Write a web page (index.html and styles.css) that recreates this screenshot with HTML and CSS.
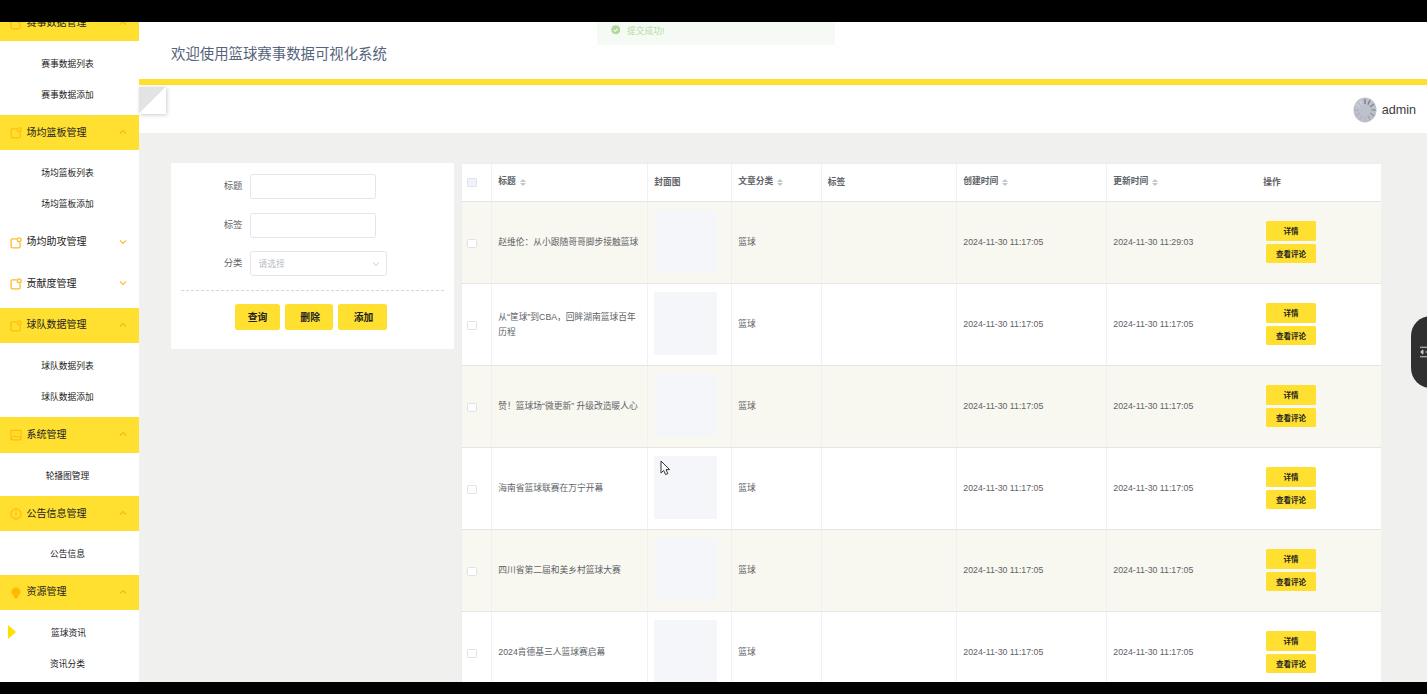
FILE: index.html
```html
<!DOCTYPE html>
<html lang="zh-CN">
<head>
<meta charset="utf-8">
<title>篮球赛事数据可视化系统</title>
<link rel="stylesheet" href="styles.css">
</head>
<body>
<svg class="defs" width="0" height="0">
  <symbol id="note" viewBox="0 0 12 12"><path d="M6.8 1.9H2.4Q1.1 1.9 1.1 3.2V9.6Q1.1 10.9 2.4 10.9H8.8Q10.1 10.9 10.1 9.6V5.4" /><circle cx="9.2" cy="2.8" r="1.9"/></symbol>
  <symbol id="pic" viewBox="0 0 12 12"><rect x="1" y="1.4" width="10" height="9.4"/><path d="M1.3 9.6L4.3 6.6L6.2 8.4L8.2 7L10.8 9.2M7.3 4.3h1.2M3.2 4.3h1"/></symbol>
  <symbol id="warn" viewBox="0 0 12 12"><circle cx="6" cy="6" r="5"/><path d="M6 3V7M6 8V9.2"/></symbol>
  <symbol id="bulb" viewBox="0 0 12 12"><path class="solid" d="M6 .5A4.4 4.4 0 0 1 8.9 8.2L7.9 9.2V10.4L6.9 11.6H5.1L4.1 10.4V9.2L3.1 8.2A4.4 4.4 0 0 1 6 .5Z"/></symbol>
  <symbol id="chev" viewBox="0 0 8 8"><path d="M1 2.5L4 5.4L7 2.5"/></symbol>
</svg>
<div class="screen">
  <nav class="sidebar">
    <div class="group open"><svg class="ico"><use href="#note"/></svg><span>赛事数据管理</span><svg class="arrow"><use href="#chev"/></svg></div>
    <div class="sub"><a>赛事数据列表</a><a>赛事数据添加</a></div>
    <div class="group open"><svg class="ico"><use href="#note"/></svg><span>场均篮板管理</span><svg class="arrow"><use href="#chev"/></svg></div>
    <div class="sub"><a>场均篮板列表</a><a>场均篮板添加</a></div>
    <div class="group"><svg class="ico"><use href="#note"/></svg><span>场均助攻管理</span><svg class="arrow"><use href="#chev"/></svg></div>
    <div class="group"><svg class="ico"><use href="#note"/></svg><span>贡献度管理</span><svg class="arrow"><use href="#chev"/></svg></div>
    <div class="group open"><svg class="ico"><use href="#note"/></svg><span>球队数据管理</span><svg class="arrow"><use href="#chev"/></svg></div>
    <div class="sub"><a>球队数据列表</a><a>球队数据添加</a></div>
    <div class="group open"><svg class="ico"><use href="#pic"/></svg><span>系统管理</span><svg class="arrow"><use href="#chev"/></svg></div>
    <div class="sub"><a>轮播图管理</a></div>
    <div class="group open"><svg class="ico"><use href="#warn"/></svg><span>公告信息管理</span><svg class="arrow"><use href="#chev"/></svg></div>
    <div class="sub"><a>公告信息</a></div>
    <div class="group open"><svg class="ico"><use href="#bulb"/></svg><span>资源管理</span><svg class="arrow"><use href="#chev"/></svg></div>
    <div class="sub"><a class="current">篮球资讯</a><a>资讯分类</a></div>
  </nav>
  <div class="page">
    <header class="banner"><h1>欢迎使用篮球赛事数据可视化系统</h1></header>
    <div class="userbar">
      <div class="fold"></div>
      <div class="user">
        <svg class="avatar" viewBox="0 0 24 26"><ellipse cx="12" cy="13" rx="11.5" ry="12.5" fill="#bcc1cb"/>
          <g stroke-width="1.4"><path d="M12 2V7" stroke="#777d8b"/><path d="M17 3.2L14.8 7.8" stroke="#7b808c"/><path d="M21 7.2L17 9.8" stroke="#858b97"/><path d="M23 13H18.4" stroke="#8d929d"/><path d="M21.2 18.8L17.2 16.2" stroke="#969ba5"/><path d="M17.3 23L15 18.5" stroke="#9fa4ae"/><path d="M12 24V19.5M6.7 23L9 18.5M2.8 18.8L6.8 16.2M1.2 13H5.8" stroke="#afb4be"/><path d="M2.8 7.2L6.8 9.8M6.8 3.2L9 7.8" stroke="#cdd1d8"/></g></svg>
        <span>admin</span>
      </div>
    </div>
    <main class="content">
      <form class="filter">
        <div class="field"><label>标题</label><div class="input"></div></div>
        <div class="field"><label>标签</label><div class="input"></div></div>
        <div class="field"><label>分类</label><div class="input select"><span>请选择</span><svg class="down"><use href="#chev"/></svg></div></div>
        <div class="actions"><button type="button" class="btn first">查询</button><button type="button" class="btn">删除</button><button type="button" class="btn">添加</button></div>
      </form>
      <section class="table">
        <div class="row head">
          <div><i class="check all"></i></div><div class="sortable">标题<i class="sort"></i></div><div>封面图</div><div class="sortable">文章分类<i class="sort"></i></div><div>标签</div><div class="sortable">创建时间<i class="sort"></i></div><div class="sortable">更新时间<i class="sort"></i></div><div class="ops">操作</div>
        </div>
        <div class="row"><div><i class="check"></i></div><div>赵维伦：从小跟随哥哥脚步接触篮球</div><div><i class="cover"></i></div><div>篮球</div><div></div><div>2024-11-30 11:17:05</div><div>2024-11-30 11:29:03</div><div class="ops"><button class="mini">详情</button><button class="mini">查看评论</button></div></div>
        <div class="row"><div><i class="check"></i></div><div>从“筐球”到CBA，回眸湖南篮球百年历程</div><div><i class="cover"></i></div><div>篮球</div><div></div><div>2024-11-30 11:17:05</div><div>2024-11-30 11:17:05</div><div class="ops"><button class="mini">详情</button><button class="mini">查看评论</button></div></div>
        <div class="row"><div><i class="check"></i></div><div>赞！篮球场“微更新” 升级改造暖人心</div><div><i class="cover"></i></div><div>篮球</div><div></div><div>2024-11-30 11:17:05</div><div>2024-11-30 11:17:05</div><div class="ops"><button class="mini">详情</button><button class="mini">查看评论</button></div></div>
        <div class="row"><div><i class="check"></i></div><div>海南省篮球联赛在万宁开幕</div><div><i class="cover"></i></div><div>篮球</div><div></div><div>2024-11-30 11:17:05</div><div>2024-11-30 11:17:05</div><div class="ops"><button class="mini">详情</button><button class="mini">查看评论</button></div></div>
        <div class="row"><div><i class="check"></i></div><div>四川省第二届和美乡村篮球大赛</div><div><i class="cover"></i></div><div>篮球</div><div></div><div>2024-11-30 11:17:05</div><div>2024-11-30 11:17:05</div><div class="ops"><button class="mini">详情</button><button class="mini">查看评论</button></div></div>
        <div class="row"><div><i class="check"></i></div><div>2024肯德基三人篮球赛启幕</div><div><i class="cover"></i></div><div>篮球</div><div></div><div>2024-11-30 11:17:05</div><div>2024-11-30 11:17:05</div><div class="ops"><button class="mini">详情</button><button class="mini">查看评论</button></div></div>
      </section>
    </main>
  </div>
  <div class="toast"><svg viewBox="0 0 10 10"><circle cx="5" cy="5" r="4.8" fill="#add99a"/><path d="M2.8 5.1L4.4 6.6L7.3 3.7" fill="none" stroke="#f5fbf2" stroke-width="1.1"/></svg><span>提交成功!</span></div>
  <div class="drawer"><svg viewBox="0 0 12 12"><path d="M0 1.2H12M0 10.8H12M1 6H4M5.5 6H12M3.2 4L1 6L3.2 8" fill="none" stroke="#d0d0d0" stroke-width="1.1"/></svg></div>
  <svg class="cursor" viewBox="0 0 11 16"><path d="M1 1V13L3.7 10.5L5.6 14.6L7.8 13.6L6 9.6H9.6Z" fill="#fff" stroke="#333" stroke-width="1"/></svg>
</div>
</body>
</html>
```
FILE: styles.css
```css
* { box-sizing: border-box; }
body {
  margin: 0;
  height: 694px;
  padding: 22px 0 12px;
  overflow: hidden;
  background: #000;
  font-family: "Liberation Sans", "Noto Sans CJK SC", sans-serif;
  color: #606266;
}
.defs { position: absolute; }
.screen {
  position: relative;
  display: flex;
  height: 660px;
  overflow: hidden;
  background: #f0f0ee;
}

/* Sidebar */
.sidebar {
  width: 139px;
  flex: none;
  margin-top: -16.6px;
  background: #fff;
  color: #222;
}
.group {
  display: flex;
  align-items: center;
  height: 35.2px;
  padding: 0 12px 0 9.5px;
  font-size: 10px;
  color: #222;
}
.group + .group { margin-top: 6.25px; }
.group.open { background: #ffdf30; }
.group span { flex: 1; padding-bottom: 3px; }
.ico { width: 12px; height: 12px; margin: 1px 5px 0 0; fill: none; stroke: #ffb92c; stroke-width: 1.3; }
.open .ico { stroke: #ffbf0e; }
.solid { fill: #ffb900; stroke: none; }
.arrow { width: 8px; height: 8px; margin-bottom: 1px; fill: none; stroke: #ffb92c; stroke-width: 1.1; }
.open .arrow { transform: rotate(180deg); stroke: #f5b81c; }
.sub { padding: 6.25px 0; }
.sub a {
  display: flex;
  align-items: center;
  justify-content: center;
  position: relative;
  height: 31px;
  padding: 1.5px 4px 0 0;
  font-size: 8.75px;
  color: #222;
}
.sub a.current { padding-right: 2px; }
.sub a.current::before {
  content: "";
  position: absolute;
  left: 8px;
  top: 9px;
  border: 7px solid transparent;
  border-left: 8px solid #ffe000;
  border-right-width: 0;
}

/* Page head */
.page { flex: 1; min-width: 0; }
.banner {
  height: 63px;
  padding: 0 32px;
  border-bottom: 6px solid #ffdf30;
  background: #fff;
}
h1 { margin: 0; font-size: 14.4px; font-weight: 400; line-height: 64px; color: #56647a; }
.userbar {
  display: flex;
  justify-content: space-between;
  height: 48px;
  padding: 1.5px 11px 0 0;
  background: #fff;
}
.fold {
  width: 27px;
  height: 27px;
  background: linear-gradient(135deg, #e3e3e3 50%, #fff 50%);
  box-shadow: 1px 1px 4px rgba(0, 0, 0, .2);
}
.user { display: flex; align-items: center; gap: 4.5px; font-size: 12.6px; color: #3b3b3b; }
.avatar { width: 24px; height: 26px; }

/* Filter form */
.content { display: flex; align-items: flex-start; gap: 7px; padding: 30px 46px 0 32px; }
.filter { flex: none; width: 283px; height: 186px; padding: 10.5px 10px 0; background: #fff; }
.field { display: flex; align-items: flex-start; margin-bottom: 14px; }
.field:nth-child(3) { margin-top: -.5px; }
label { width: 61.5px; margin-right: 7px; padding-top: 1px; text-align: right; font-size: 9.4px; line-height: 22px; color: #606266; }
.input { width: 126px; height: 25px; border: 1px solid #e3e5ea; border-radius: 2.5px; }
.select {
  display: flex;
  align-items: center;
  justify-content: space-between;
  width: 137px;
  padding: 0 6px 0 8px;
  font-size: 8.75px;
  color: #b8bcc6;
}
.down { width: 8px; height: 8px; fill: none; stroke: #c0c4cc; stroke-width: .9; }
.actions {
  display: flex;
  gap: 5px;
  padding: 12.5px 0 0 54px;
  border-top: 1px dashed #d8d8d8;
}
button { border: 0; padding: 0; font-family: inherit; background: #ffdf30; color: #222; }
.btn { width: 48.3px; height: 26.5px; padding-left: 2px; border-radius: 2.5px; font-size: 9.8px; font-weight: 700; }
.btn.first { width: 45px; padding-left: 0; }

/* Article table */
.table { width: 920px; border-left: 1px solid #ededf1; border-top: 1px solid #ededf1; background: #fff; font-size: 8.75px; line-height: 14.4px; }
.row {
  display: grid;
  grid-template-columns: 30px 156px 84px 89.5px 135.5px 150px 150px 1fr;
  height: 82px;
  border-bottom: 1px solid #e5e5e8;
}
.row:nth-child(even) { background: #f8f8f0; }
.row > div { display: flex; align-items: center; padding: 0 6.3px; border-right: 1px solid #f1f1f5; }
.row > div:first-child { padding-left: 5px; }
.row > div:nth-child(7), .row > div:nth-child(8) { border-right: 0; }
.head { height: 38px; font-weight: 700; }
.head > div { padding-bottom: 1px; }
.row.head > .sortable { padding-bottom: 2px; }
.check { width: 10px; height: 9px; margin-top: 1px; border: 1px solid #e0e2e8; border-radius: 1.5px; background: #fff; }
.all { background: #edf2fc; }
.cover { width: 63px; height: 63px; margin-bottom: 3px; background: #f5f6fa; }
.sort { display: flex; flex-direction: column; gap: 1px; margin: 1px 0 0 4px; }
.sort::before, .sort::after { content: ""; border: 3px solid transparent; }
.sort::before { border-top: 0; border-bottom-color: #c0c4cc; }
.sort::after { border-bottom: 0; border-top-color: #c0c4cc; }
.row > .ops { flex-direction: column; align-items: flex-start; justify-content: center; gap: 3px; padding: 0 0 1px 9px; }
.head > .ops { padding-left: 6.3px; }
.mini { width: 50px; height: 19.6px; border-radius: 1.5px; font-size: 7.5px; font-weight: 700; }

/* Overlays */
.toast {
  position: absolute;
  left: 597px;
  top: -7px;
  display: flex;
  align-items: center;
  gap: 7px;
  width: 238px;
  height: 30px;
  padding: 0 0 0 13.5px;
  background: #f5fbf4;
  font-size: 8.75px;
  color: #b4dca3;
}
.toast svg { width: 9.5px; height: 9.5px; }
.drawer {
  position: absolute;
  left: 1411px;
  top: 294px;
  width: 40px;
  height: 72px;
  padding: 30px 0 0 9px;
  border-radius: 20px;
  background: #303030;
}
.drawer svg { display: block; width: 12px; height: 12px; }
.cursor { position: absolute; left: 659.5px; top: 438px; width: 11px; height: 16px; }
```
